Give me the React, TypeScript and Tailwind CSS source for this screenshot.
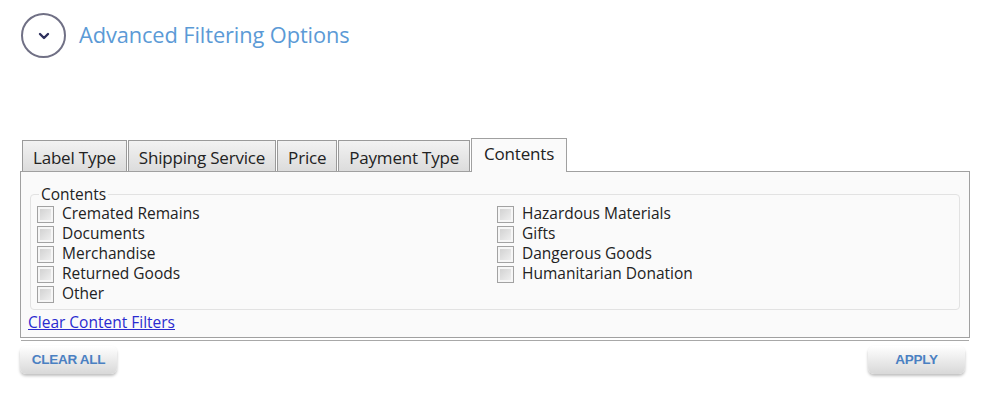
import React, { useState } from "react";

const tabs = ["Label Type", "Shipping Service", "Price", "Payment Type", "Contents"];

const leftItems = ["Cremated Remains", "Documents", "Merchandise", "Returned Goods", "Other"];
const rightItems = ["Hazardous Materials", "Gifts", "Dangerous Goods", "Humanitarian Donation"];

function Check({ label }: { label: string }) {
  return (
    <label className="flex h-[20px] items-center gap-[8px]">
      <span className="h-[17px] w-[17px] border border-[#a2a2a2] bg-gradient-to-br from-[#cdcdcd] to-[#f4f4f4] shadow-[inset_0_0_0_2px_#f6f6f6]" />
      <span className="text-[15.5px] leading-none text-[#222]">{label}</span>
    </label>
  );
}

export default function App() {
  const [active, setActive] = useState("Contents");

  return (
    <div className="h-[396px] w-[990px] bg-white font-['Open_Sans',sans-serif]">
      {/* header */}
      <div className="flex items-center gap-[13px] pl-[21px] pt-[13px]">
        <div className="flex h-[45px] w-[45px] items-center justify-center rounded-full border-2 border-[#707085]">
          <svg width="12" height="8" viewBox="0 0 12 8" fill="none">
            <path d="M2 2l4 4 4-4" stroke="#2d2f5c" strokeWidth="2.4" strokeLinecap="round" strokeLinejoin="round" />
          </svg>
        </div>
        <h1 className="text-[21.8px] tracking-[-0.1px] text-[#5b9ad6]">Advanced Filtering Options</h1>
      </div>

      {/* tabs */}
      <div className="mt-[80px] px-[20px]">
        <div className="flex items-end pl-[2px]">
          {tabs.map((t) => {
            const sel = t === active;
            return (
              <button
                key={t}
                onClick={() => setActive(t)}
                className={
                  sel
                    ? "relative z-10 -mb-px h-[34px] border border-b-0 border-[#a0a0a0] bg-[#fafafa] px-[12px] pb-[3px] text-[17px] tracking-[-0.2px] text-[#222]"
                    : "mr-px h-[31px] border border-b-0 border-[#9a9a9a] bg-gradient-to-b from-[#f2f2f2] to-[#dcdcdc] px-[10px] pt-[3px] text-[17px] tracking-[-0.2px] text-[#222]"
                }
              >
                {t}
              </button>
            );
          })}
        </div>

        {/* panel */}
        <div className="border border-[#a0a0a0] bg-[#fafafa] px-[9px] pb-[3px] pt-[14px] shadow-[0_3px_0_-1px_#ffffff,0_4px_0_-1px_#a8a8a8]">
          <fieldset className="rounded-[4px] border border-[#e2e2e2] px-[6px] pb-[5px]">
            <legend className="ml-[2px] px-[2px] text-[15.5px] leading-[16px] text-[#222]">Contents</legend>
            <div className="grid grid-cols-2 pt-[2px]">
              <div className="flex flex-col">
                {leftItems.map((i) => (
                  <Check key={i} label={i} />
                ))}
              </div>
              <div className="flex flex-col pl-[2px]">
                {rightItems.map((i) => (
                  <Check key={i} label={i} />
                ))}
              </div>
            </div>
          </fieldset>
          <a href="#" className="-ml-[2px] mt-[1px] inline-block text-[15.5px] leading-[20px] text-[#2a2ad0] underline">
            Clear Content Filters
          </a>
        </div>

        {/* actions */}
        <div className="mt-[8px] flex justify-between pr-[5px]">
          <button className="h-[28px] w-[97px] rounded-[6px] bg-gradient-to-b from-[#ffffff] to-[#d8d8d8] pt-[1px] font-['Liberation_Sans',sans-serif] text-[13.5px] font-bold tracking-[-0.3px] text-[#4a80c2] shadow-[0_2px_3px_rgba(0,0,0,0.25)]">
            CLEAR ALL
          </button>
          <button className="h-[28px] w-[97px] rounded-[6px] bg-gradient-to-b from-[#ffffff] to-[#d8d8d8] pt-[1px] font-['Liberation_Sans',sans-serif] text-[13.5px] font-bold tracking-[-0.3px] text-[#4a80c2] shadow-[0_2px_3px_rgba(0,0,0,0.25)]">
            APPLY
          </button>
        </div>
      </div>
    </div>
  );
}
